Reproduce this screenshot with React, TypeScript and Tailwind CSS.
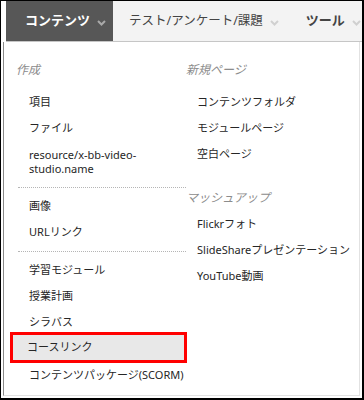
const font = { fontFamily: '"Noto Sans", "Noto Sans CJK JP", sans-serif' };

function Chevron({ color }: { color: string }) {
  return (
    <svg width="9" height="6" viewBox="0 0 9 6" className="ml-[7px] mt-[3px] shrink-0">
      <path d="M1 1l3.5 3.5L8 1" fill="none" stroke={color} strokeWidth="2" />
    </svg>
  );
}

function Heading({ children }: { children: string }) {
  return (
    <div
      className="h-[20px] flex items-center text-[12px] italic text-[#8c8c8c] whitespace-nowrap"
      style={{ fontFamily: '"Liberation Serif", "Noto Sans CJK JP", serif' }}
    >
      {children}
    </div>
  );
}

function Item({ children, pad = 'pl-[13px]' }: { children: React.ReactNode; pad?: string }) {
  return (
    <div className={`h-[26px] flex items-center ${pad} text-[11px] text-[#262626] whitespace-nowrap`}>
      {children}
    </div>
  );
}

function Dots() {
  return <div className="mt-[6px] mb-[5px] ml-[2px] w-[168px] border-t border-dotted border-[#b5b5b5]" />;
}

export default function App() {
  return (
    <div
      className="w-[364px] h-[400px] bg-white border-black border-t border-l border-r-2 border-b-2 flex flex-col overflow-hidden"
      style={font}
    >
      <div className="h-[41px] ml-[5px] flex bg-[#f3f3f3] border-b border-[#c6c6c6] whitespace-nowrap">
        <div className="w-[107px] shrink-0 bg-[#575757] flex items-center pl-[19px] text-[13px] font-bold text-white">
          コンテンツ
          <Chevron color="#a9a9a9" />
        </div>
        <div className="flex items-center pl-[16px] text-[12.5px] text-[#444]">
          テスト/アンケート/課題
          <Chevron color="#d0d0d0" />
        </div>
        <div className="flex items-center pl-[27px] text-[13px] font-bold text-[#444]">
          ツール
          <Chevron color="#d0d0d0" />
        </div>
      </div>
      <div className="flex-1 mx-[2px] mb-[2px] border-l border-[#8a8a8a] border-r border-b border-r-[#e2e2e2] border-b-[#e2e2e2] flex pt-[18px]">
        <div className="w-[182px] shrink-0 pl-[12px] flex flex-col">
          <Heading>作成</Heading>
          <div className="h-[9px]" />
          <Item>項目</Item>
          <Item>ファイル</Item>
          <div className="pl-[13px] pt-[7px] pb-[5px] text-[11px] leading-[14px] text-[#262626]">
            resource/x-bb-video-
            <br />
            studio.name
          </div>
          <Dots />
          <Item>画像</Item>
          <Item>URLリンク</Item>
          <Dots />
          <Item>学習モジュール</Item>
          <Item>授業計画</Item>
          <Item>シラバス</Item>
          <div className="h-[31px] -mt-[3px] -mb-[1px] -ml-[6px] -mr-[1px] border-[3px] border-[#f00] bg-[#e8e8e8] flex items-center pl-[14px] text-[11px] text-[#262626]">
            コースリンク
          </div>
          <Item>コンテンツパッケージ(SCORM)</Item>
        </div>
        <div className="flex-1 flex flex-col">
          <Heading>新規ページ</Heading>
          <div className="h-[9px]" />
          <Item pad="pl-[11px]">コンテンツフォルダ</Item>
          <Item pad="pl-[11px]">モジュールページ</Item>
          <Item pad="pl-[11px]">空白ページ</Item>
          <div className="h-[21px]" />
          <Heading>マッシュアップ</Heading>
          <div className="h-[3px]" />
          <Item pad="pl-[11px]">Flickrフォト</Item>
          <Item pad="pl-[11px]">SlideShareプレゼンテーション</Item>
          <Item pad="pl-[11px]">YouTube動画</Item>
        </div>
      </div>
    </div>
  );
}
